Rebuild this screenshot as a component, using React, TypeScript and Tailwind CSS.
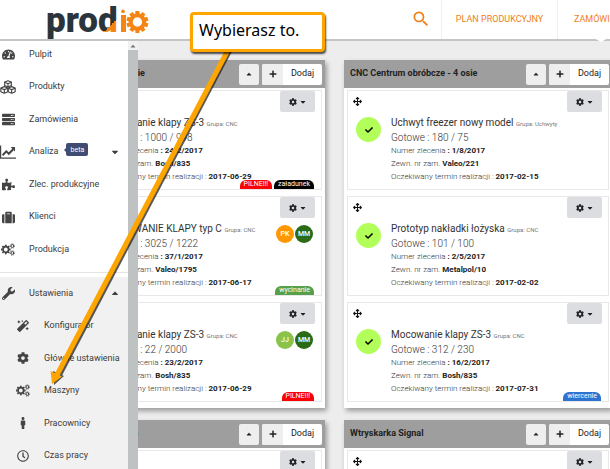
import type { ReactNode } from "react";
import {
  FaArrowsAlt,
  FaCaretDown,
  FaCaretUp,
  FaCheck,
  FaCog,
  FaMagic,
  FaMale,
  FaPlus,
  FaPuzzlePiece,
  FaRegClock,
  FaServer,
  FaSuitcase,
  FaTachometerAlt,
  FaWrench,
} from "react-icons/fa";
import { MdSearch } from "react-icons/md";

type Badge = { text: string; className: string };

type Order = {
  name: string;
  group: string;
  done: string;
  orderNo: string;
  externalNo: string;
  dueDate: string;
  people?: Badge[];
  tags?: Badge[];
};

type Machine = { name: string; orders: Order[] };

const URGENT: Badge = { text: "PILNE!!!", className: "bg-[#fb0007]" };
const MM: Badge = { text: "MM", className: "bg-[#2b6b16]" };

const nextOrder: Order = {
  name: "Mocowanie klapy ZS-3",
  group: "CNC",
  done: "0 / 500",
  orderNo: "25/2/2017",
  externalNo: "Bosh/835",
  dueDate: "2017-08-31",
};

const machines: Machine[] = [
  {
    name: "CNC Centrum 3 osie",
    orders: [
      {
        name: "Mocowanie klapy ZS-3",
        group: "CNC",
        done: "1000 / 998",
        orderNo: "24/2/2017",
        externalNo: "Bosh/835",
        dueDate: "2017-06-29",
        tags: [URGENT, { text: "załadunek", className: "bg-black" }],
      },
      {
        name: "MOCOWANIE KLAPY typ C",
        group: "CNC",
        done: "3025 / 1222",
        orderNo: "37/1/2017",
        externalNo: "Valeo/1795",
        dueDate: "2017-06-17",
        people: [{ text: "PK", className: "bg-[#ff9800]" }, MM],
        tags: [{ text: "wycinanie", className: "bg-[#57a04a]" }],
      },
      {
        name: "Mocowanie klapy ZS-3",
        group: "CNC",
        done: "22 / 2000",
        orderNo: "23/2/2017",
        externalNo: "Bosh/835",
        dueDate: "2017-06-29",
        people: [{ text: "JJ", className: "bg-[#8bc34a]" }, MM],
        tags: [URGENT],
      },
    ],
  },
  {
    name: "CNC Centrum obróbcze - 4 osie",
    orders: [
      {
        name: "Uchwyt freezer nowy model",
        group: "Uchwyty",
        done: "180 / 75",
        orderNo: "1/8/2017",
        externalNo: "Valeo/221",
        dueDate: "2017-02-15",
      },
      {
        name: "Prototyp nakładki łożyska",
        group: "CNC",
        done: "101 / 100",
        orderNo: "2/5/2017",
        externalNo: "Metalpol/10",
        dueDate: "2017-02-02",
      },
      {
        name: "Mocowanie klapy ZS-3",
        group: "CNC",
        done: "312 / 230",
        orderNo: "16/2/2017",
        externalNo: "Bosh/835",
        dueDate: "2017-07-31",
        tags: [{ text: "wiercenie", className: "bg-[#2f73d2]" }],
      },
    ],
  },
  { name: "Wtryskarka Engels", orders: [nextOrder] },
  { name: "Wtryskarka Signal", orders: [nextOrder] },
];

function ChartIcon() {
  return (
    <svg viewBox="0 0 16 14" className="w-4 h-3.5" fill="none" stroke="currentColor">
      <path d="M0.6 0.5V13.2H16" strokeWidth="1.2" />
      <path d="M2.6 10.2L6.3 6.4L8.8 8.8L13.2 4.2" strokeWidth="2" />
      <path d="M10.6 2H15V6.4Z" fill="currentColor" stroke="none" />
    </svg>
  );
}

function CubesIcon() {
  return (
    <svg
      viewBox="0 0 18 16"
      className="w-4 h-3.5 overflow-visible"
      fill="none"
      stroke="currentColor"
      strokeWidth="1.3"
      strokeLinejoin="round"
    >
      <path d="M9 0.8L12.8 2.4V6.4L9 8L5.2 6.4V2.4Z" />
      <path d="M5.2 2.6L9 4.2L12.8 2.6M9 4.2V8" />
      <path d="M4.8 7.6L8.8 9.2V13.4L4.8 15.2L0.8 13.4V9.2Z" />
      <path d="M0.8 9.4L4.8 11L8.8 9.4M4.8 11V15.2" />
      <path d="M13.2 7.6L17.2 9.2V13.4L13.2 15.2L9.2 13.4V9.2Z" />
      <path d="M9.2 9.4L13.2 11L17.2 9.4M13.2 11V15.2" />
    </svg>
  );
}

function CogsIcon() {
  const teeth = [0, 45, 90, 135, 180, 225, 270, 315];

  return (
    <svg viewBox="0 0 14 13" className="w-3.5 h-[13px] overflow-visible" fill="none" stroke="currentColor">
      <circle cx="4.8" cy="6.5" r="2.8" strokeWidth="1.7" />
      {teeth.map((angle) => (
        <path
          key={angle}
          d="M4.8 3.2V1.7"
          strokeWidth="1.8"
          transform={`rotate(${angle} 4.8 6.5)`}
        />
      ))}
      <circle cx="11.3" cy="3" r="1.4" strokeWidth="1" />
      <circle cx="11.3" cy="3" r="2.2" strokeWidth="0.9" strokeDasharray="0.9 0.83" />
      <circle cx="11.3" cy="10" r="1.4" strokeWidth="1" />
      <circle cx="11.3" cy="10" r="2.2" strokeWidth="0.9" strokeDasharray="0.9 0.83" />
    </svg>
  );
}

function Logo() {
  const teeth = [0, 36, 72, 108, 144, 180, 216, 252, 288, 324];

  return (
    <svg viewBox="0 0 104 36" className="w-[104px] h-9 overflow-visible" role="img" aria-label="prodio">
      <defs>
        <linearGradient id="ink" gradientUnits="userSpaceOnUse" x1="33" y1="33" x2="53" y2="53">
          <stop offset="0.5" stopColor="#2c343b" />
          <stop offset="0.5" stopColor="#f58413" />
        </linearGradient>
      </defs>
      <text
        x="0"
        y="28"
        fill="url(#ink)"
        className="font-['Roboto'] font-black text-[35px]"
      >
        prod
      </text>
      <rect x="75" y="11" width="5" height="17" fill="#f58413" />
      <circle cx="77" cy="7.4" r="1.8" fill="#f58413" />
      <g fill="#f58413">
        {teeth.map((angle) => (
          <rect
            key={angle}
            x="89.4"
            y="7"
            width="4"
            height="4.5"
            transform={`rotate(${angle} 91.4 18)`}
          />
        ))}
      </g>
      <circle cx="91.4" cy="18" r="6.7" fill="none" stroke="#f58413" strokeWidth="4" />
    </svg>
  );
}

function Header() {
  return (
    <header className="relative z-10 flex h-[41px] items-stretch border-b-2 border-[#c4c4c4] bg-white">
      <a href="#" className="ml-[46px] mt-1 shrink-0">
        <Logo />
      </a>
      <div className="w-[251px] shrink-0" />
      <button type="button" aria-label="Szukaj" className="w-10 shrink-0 grid place-items-center pb-0.5">
        <MdSearch className="size-5 text-[#ef7f17]" />
      </button>
      <nav className="flex shrink-0 text-[9px] text-[#ef7f17]">
        <a href="#" className="w-[117px] grid place-items-center border-x border-[#f0f0f0]">
          PLAN PRODUKCYJNY
        </a>
        <a href="#" className="relative flex items-center pl-4 pr-2">
          ZAMÓWIENIA
          <span className="absolute left-9 -bottom-[3px] border-x-[7px] border-t-[4px] border-x-transparent border-t-white" />
        </a>
      </nav>
    </header>
  );
}

type NavItemProps = {
  icon: ReactNode;
  label: string;
  nested?: boolean;
  children?: ReactNode;
};

function NavItem({ icon, label, nested, children }: NavItemProps) {
  return (
    <a href="#" className="flex items-center text-[9px] text-[#3c3c3c]">
      <span
        className={
          nested
            ? "ml-4 w-3.5 shrink-0 grid place-items-center text-[12px] text-[#444]"
            : "w-4 shrink-0 grid place-items-center text-[13px] text-[#444]"
        }
      >
        {icon}
      </span>
      <span className={nested ? "ml-3.5 whitespace-nowrap" : "ml-[13px] whitespace-nowrap"}>
        {label}
      </span>
      {children}
    </a>
  );
}

function Sidebar() {
  return (
    <aside className="flex w-[138px] shrink-0 overflow-hidden bg-white">
      <nav className="-mt-[3px] w-32">
        <div className="grid auto-rows-fr h-57">
          <NavItem icon={<FaTachometerAlt />} label="Pulpit" />
          <NavItem icon={<CubesIcon />} label="Produkty" />
          <NavItem icon={<FaServer />} label="Zamówienia" />
          <NavItem icon={<ChartIcon />} label="Analiza">
            <span className="relative ml-2 mb-1 flex h-[13px] items-center rounded-xs bg-[#414d70] px-1 text-[7px] text-white">
              <span className="absolute -left-0.5 border-y-2 border-r-2 border-y-transparent border-r-[#414d70]" />
              beta
            </span>
            <FaCaretDown className="ml-auto mr-2 size-2.5" />
          </NavItem>
          <NavItem icon={<FaPuzzlePiece />} label="Zlec. produkcyjne" />
          <NavItem icon={<FaSuitcase />} label="Klienci" />
          <NavItem icon={<CogsIcon />} label="Produkcja" />
        </div>
        <div className="mt-1.5 border-t border-[#e4e4e4] pt-1">
          <div className="grid auto-rows-fr h-[195px] bg-[#f1f1f1]">
            <NavItem icon={<FaWrench />} label="Ustawienia">
              <FaCaretUp className="ml-auto mr-2 size-2.5" />
            </NavItem>
            <NavItem nested icon={<FaMagic />} label="Konfigurator" />
            <NavItem nested icon={<FaCog />} label="Główne ustawienia" />
            <NavItem nested icon={<CogsIcon />} label="Maszyny" />
            <NavItem nested icon={<FaMale />} label="Pracownicy" />
            <NavItem nested icon={<FaRegClock />} label="Czas pracy" />
          </div>
        </div>
      </nav>
      <div className="w-[10px] bg-[#bfc2c2]">
        <div className="grid h-[9px] place-items-center bg-[#f1f1f1] text-[#777]">
          <FaCaretUp className="size-2" />
        </div>
      </div>
    </aside>
  );
}

function OrderCard({ order, ready }: { order: Order; ready: boolean }) {
  const { people = [], tags = [] } = order;

  return (
    <article className="relative h-[100px] border border-[#e8e8e8] bg-white">
      <div className="flex h-[21px] items-center justify-between pl-[5px] pr-1.5">
        <button type="button" aria-label="Przenieś">
          <FaArrowsAlt className="size-[9px] text-[#111]" />
        </button>
        <button
          type="button"
          aria-label="Opcje"
          className="flex h-[21px] w-[35px] items-center justify-center gap-0.5 rounded-xs bg-[#dcdde1] text-[#222]"
        >
          <FaCog className="size-2" />
          <FaCaretDown className="size-2" />
        </button>
      </div>
      <div className="mt-[3px] flex pl-2 pr-2">
        <div className="mt-0.5 w-[35px] shrink-0">
          {ready && (
            <div className="grid size-[25px] place-items-center rounded-full bg-[#b2ff59]">
              <FaCheck className="size-2 text-black" />
            </div>
          )}
        </div>
        <div className="flex-1 whitespace-nowrap text-[8px] leading-[13px] font-light text-[#333]">
          <h3 className="text-[10px] leading-4 font-normal text-[#333]">
            {order.name} <small className="text-[6px] text-[#777]">Grupa: {order.group}</small>
          </h3>
          <p className="text-[10px] leading-3">Gotowe : {order.done}</p>
          <p>
            Numer zlecenia <b className="font-bold text-[#222]">: {order.orderNo}</b>
          </p>
          <p>
            Zewn. nr zam. <b className="font-bold text-[#222]">{order.externalNo}</b>
          </p>
          <p>
            Oczekiwany termin realizacji : <b className="font-bold text-[#222]">{order.dueDate}</b>
          </p>
        </div>
      </div>
      <div className="absolute right-2 top-7 flex gap-px">
        {people.map((person) => (
          <span
            key={person.text}
            className={`grid size-[18px] place-items-center rounded-full text-[7px] font-medium text-white ${person.className}`}
          >
            {person.text}
          </span>
        ))}
      </div>
      <div className="absolute right-[7px] bottom-0 flex gap-0.5">
        {tags.map((tag) => (
          <span
            key={tag.text}
            className={`h-[9px] rounded-t-md px-1 text-[7px] leading-[9px] text-white ${tag.className}`}
          >
            {tag.text}
          </span>
        ))}
      </div>
    </article>
  );
}

function MachineColumn({ machine, ready }: { machine: Machine; ready: boolean }) {
  return (
    <section className="bg-white shadow-[2px_3px_5px_rgba(0,0,0,0.35)]">
      <header className="flex h-7 items-center gap-[3px] bg-[#9e9e9e] pl-1.5 pr-[3px] text-[9px] text-[#222]">
        <h2 className="flex-1 whitespace-nowrap font-bold">{machine.name}</h2>
        <button
          type="button"
          aria-label="Zwiń"
          className="grid h-[21px] w-5 place-items-center rounded-xs bg-[#eee]"
        >
          <FaCaretUp className="size-2" />
        </button>
        <button type="button" className="flex h-[21px] overflow-hidden rounded-xs bg-white">
          <span className="grid h-full w-[21px] place-items-center bg-[#eee]">
            <FaPlus className="size-2" />
          </span>
          <span className="grid h-full w-[39px] place-items-center">Dodaj</span>
        </button>
      </header>
      <div className="flex flex-col gap-1.5 px-[3px] pt-0.5 pb-1.5">
        {machine.orders.map((order) => (
          <OrderCard key={order.orderNo} order={order} ready={ready} />
        ))}
      </div>
    </section>
  );
}

function Callout() {
  return (
    <div className="pointer-events-none absolute inset-0 z-20">
      <svg className="absolute left-0 top-0" width="260" height="400" viewBox="0 0 260 400">
        <g transform="translate(2 1)" opacity="0.75" fill="#222" stroke="#222">
          <path d="M229 48L58 374" strokeWidth="4" fill="none" />
          <path d="M52 384L51 370L62 375Z" stroke="none" />
        </g>
        <path d="M229 48L57 375" stroke="#ffa500" strokeWidth="5" />
        <path d="M52 384L50.5 371L62 376.5Z" fill="#ffa500" />
      </svg>
      <p className="absolute left-[190px] top-3 flex h-10 w-[135px] items-center rounded-sm border-3 border-[#ffa500] bg-white pl-1.5 pb-1 font-['Noto_Sans',sans-serif] text-[16px] text-black shadow-[1px_2px_2px_rgba(0,0,0,0.7)]">
        Wybierasz to.
      </p>
    </div>
  );
}

export default function App() {
  return (
    <div className="relative flex h-screen flex-col overflow-hidden bg-[#ededed] font-['Roboto',sans-serif]">
      <Header />
      <div className="flex min-h-0 flex-1">
        <Sidebar />
        <main className="min-w-0 flex-1 overflow-hidden">
          <div className="-ml-[81px] -mr-0.5 grid grid-cols-2 gap-x-[19px] gap-y-3 pt-[19px]">
            {machines.map((machine, idx) => (
              <MachineColumn key={machine.name} machine={machine} ready={idx % 2 === 1} />
            ))}
          </div>
        </main>
      </div>
      <Callout />
    </div>
  );
}
